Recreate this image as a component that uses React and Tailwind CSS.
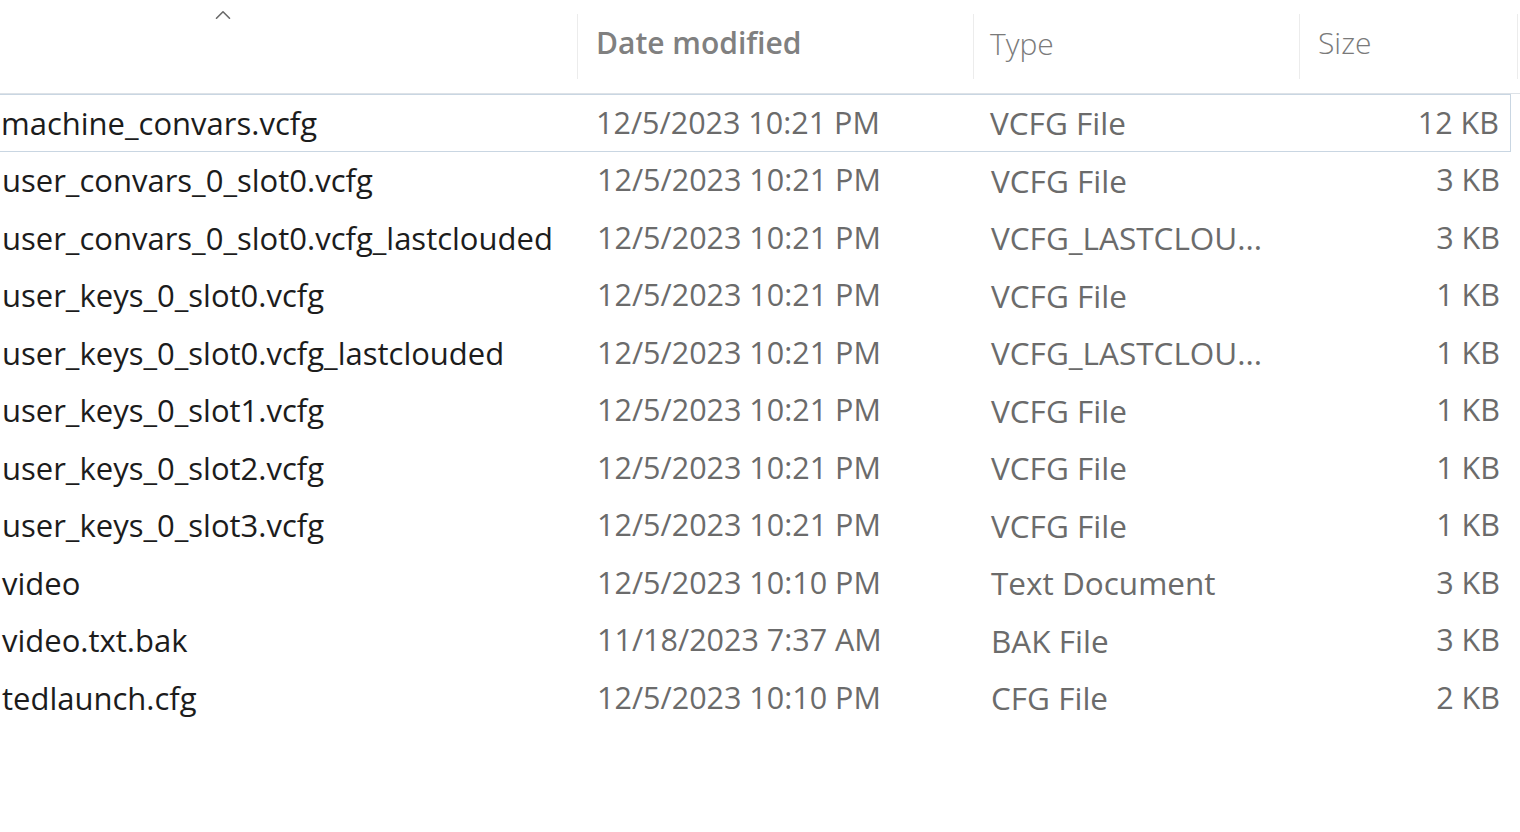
import { ChevronUp } from "lucide-react";

const files = [
  { name: "machine_convars.vcfg", date: "12/5/2023 10:21 PM", type: "VCFG File", size: "12 KB" },
  { name: "user_convars_0_slot0.vcfg", date: "12/5/2023 10:21 PM", type: "VCFG File", size: "3 KB" },
  { name: "user_convars_0_slot0.vcfg_lastclouded", date: "12/5/2023 10:21 PM", type: "VCFG_LASTCLOU...", size: "3 KB" },
  { name: "user_keys_0_slot0.vcfg", date: "12/5/2023 10:21 PM", type: "VCFG File", size: "1 KB" },
  { name: "user_keys_0_slot0.vcfg_lastclouded", date: "12/5/2023 10:21 PM", type: "VCFG_LASTCLOU...", size: "1 KB" },
  { name: "user_keys_0_slot1.vcfg", date: "12/5/2023 10:21 PM", type: "VCFG File", size: "1 KB" },
  { name: "user_keys_0_slot2.vcfg", date: "12/5/2023 10:21 PM", type: "VCFG File", size: "1 KB" },
  { name: "user_keys_0_slot3.vcfg", date: "12/5/2023 10:21 PM", type: "VCFG File", size: "1 KB" },
  { name: "video", date: "12/5/2023 10:10 PM", type: "Text Document", size: "3 KB" },
  { name: "video.txt.bak", date: "11/18/2023 7:37 AM", type: "BAK File", size: "3 KB" },
  { name: "tedlaunch.cfg", date: "12/5/2023 10:10 PM", type: "CFG File", size: "2 KB" },
];

const cols = "grid grid-cols-[578px_396px_326px_218px]";

export default function App() {
  return (
    <div className="w-[1520px] h-[832px] overflow-hidden bg-white font-['Open_Sans',sans-serif] text-[30px]">
      {/* column header */}
      <div className={`${cols} h-[94px] border-b border-[#dde2e7]`}>
        <div className="relative border-r border-[#ececec] my-[14px]">
          <ChevronUp className="absolute left-[210px] top-[-12px] h-[26px] w-[26px] text-[#6a6a6a]" strokeWidth={1.5} />
        </div>
        <div className="flex items-center pl-[18px] pb-[8px] border-r border-[#ececec] my-[14px] text-[#808080] font-semibold">
          Date modified
        </div>
        <div className="flex items-center pl-[16px] pb-[6px] border-r border-[#ececec] my-[14px] text-[#7a7a7a] font-light">
          Type
        </div>
        <div className="flex items-center pl-[18px] pb-[8px] my-[14px] text-[#7a7a7a] font-light border-r border-[#ececec]">
          Size
        </div>
      </div>

      {/* rows */}
      <div className="flex flex-col">
        {files.map((f, i) => (
          <div
            key={f.name}
            className={`${cols} h-[57.5px] items-center ${
              i === 0 ? "border border-l-0 border-[#c9d6e2] w-[1511px]" : "border border-transparent"
            }`}
          >
            <div className="whitespace-nowrap text-[#1c1c1c] text-[31px] pl-[1px]">{f.name}</div>
            <div className="whitespace-nowrap text-[#6b6b6b] text-[30.5px] pl-[18px]">{f.date}</div>
            <div className="whitespace-nowrap text-[#6b6b6b] text-[31.5px] pl-[16px]">{f.type}</div>
            <div className="whitespace-nowrap text-[#6b6b6b] text-[30.5px] text-right pr-[19px]">{f.size}</div>
          </div>
        ))}
      </div>
    </div>
  );
}
